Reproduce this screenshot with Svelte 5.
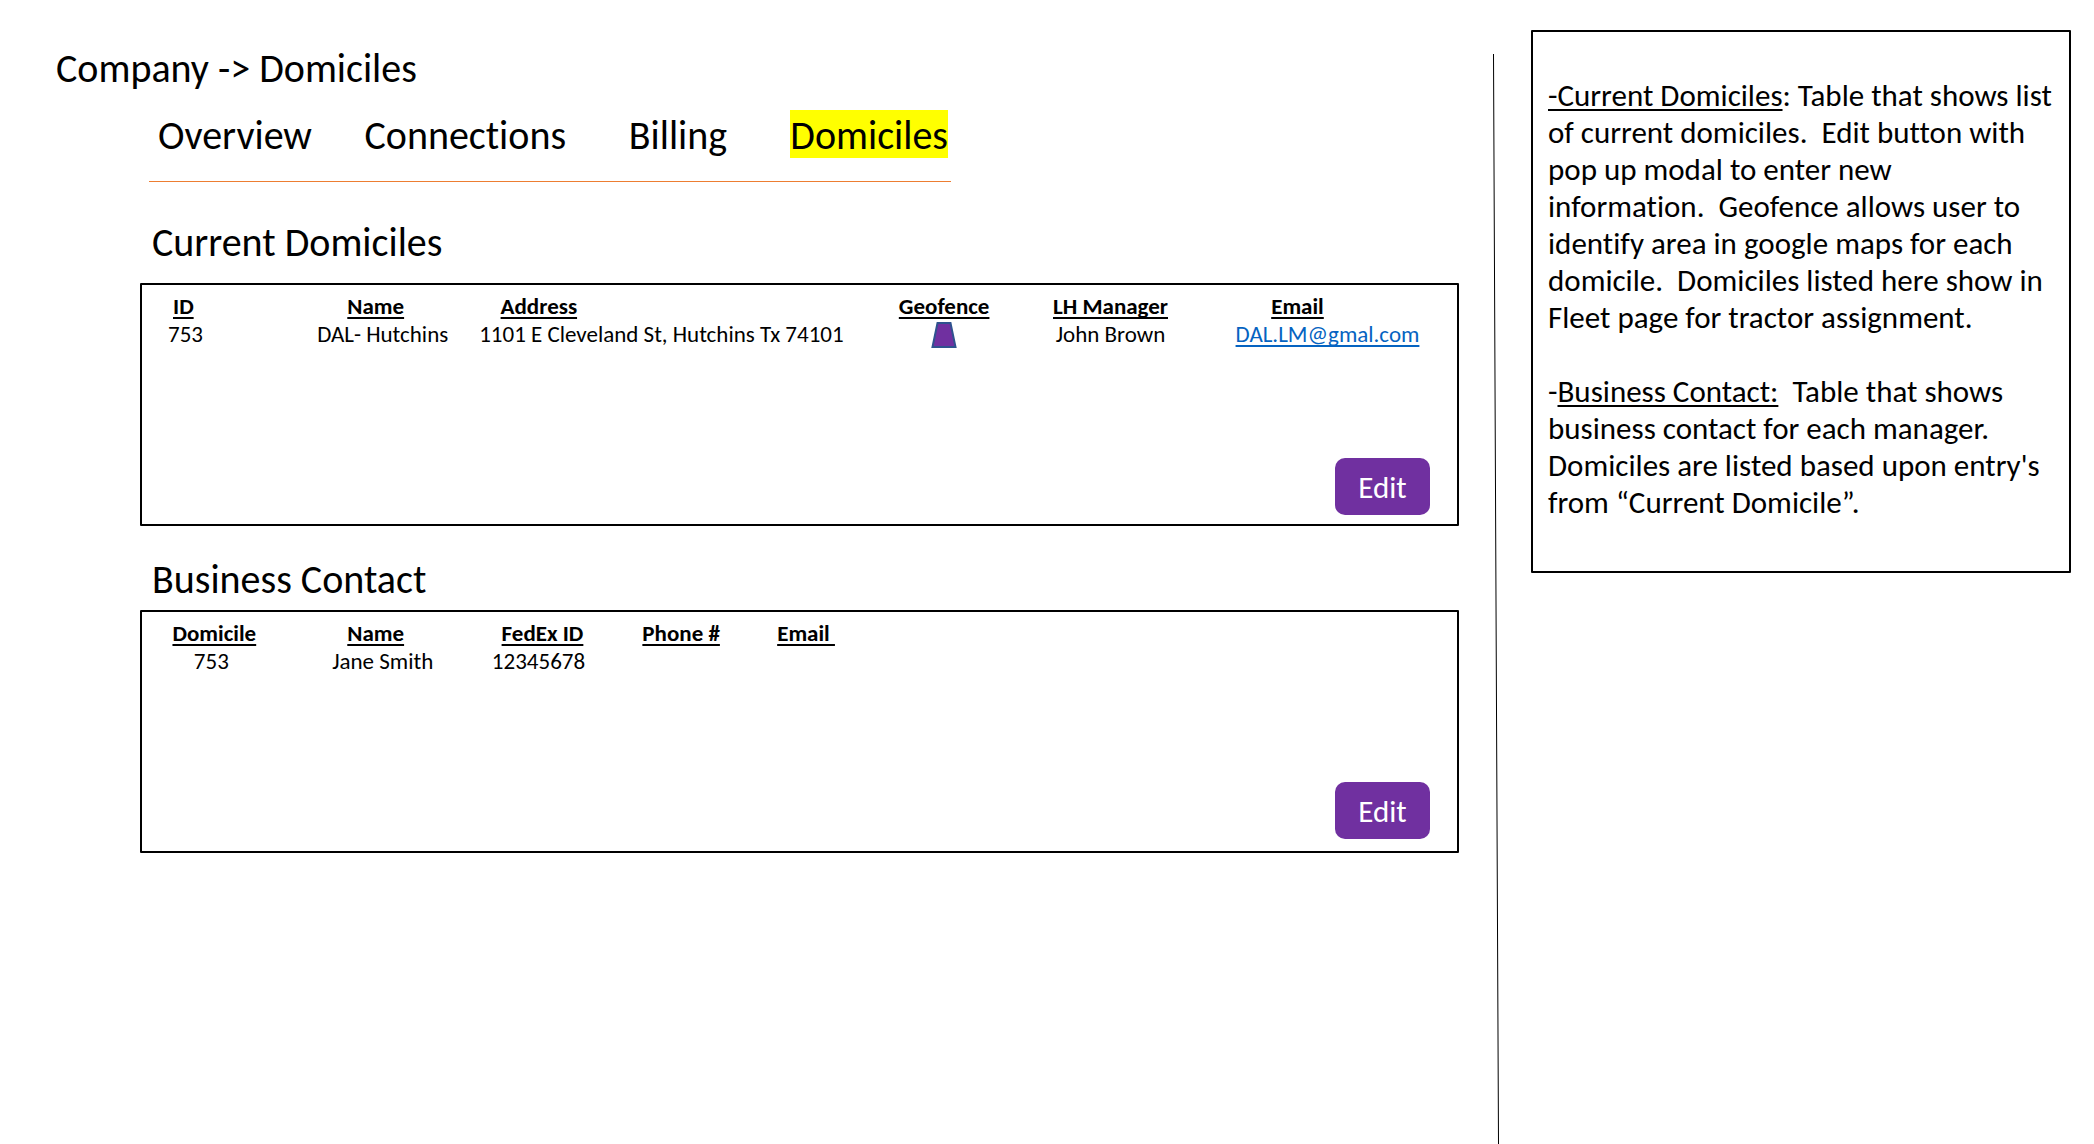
<script>
  const tabs = [
    { label: 'Overview', href: '#overview' },
    { label: 'Connections', href: '#connections' },
    { label: 'Billing', href: '#billing' },
    { label: 'Domiciles', href: '#domiciles', active: true }
  ];

  const domicileColumns = [
    { label: 'ID', width: 12, align: 'start' },
    { label: 'Name', width: 12, align: 'name' },
    { label: 'Address', width: 31, align: 'address' },
    { label: 'Geofence', width: 12 },
    { label: 'LH Manager', width: 13, align: 'manager' },
    { label: 'Email', width: 20, align: 'email' }
  ];

  const domiciles = [
    {
      id: '753',
      name: 'DAL- Hutchins',
      address: '1101 E Cleveland St, Hutchins Tx 74101',
      manager: 'John Brown',
      email: 'DAL.LM@gmal.com'
    }
  ];

  const contactColumns = [
    { label: 'Domicile', width: 11 },
    { label: 'Name', width: 14, align: 'name' },
    { label: 'FedEx ID', width: 10, align: 'fedex' },
    { label: 'Phone #', width: 12 },
    { label: 'Email\u00a0', width: 7 },
    { label: '', width: 46 }
  ];

  const contacts = [{ domicile: '753', name: 'Jane Smith', fedex: '12345678' }];
</script>

<div class="page">
  <main class="content">
    <h1>Company -&gt; Domiciles</h1>

    <nav class="tabs" aria-label="Company sections">
      {#each tabs as tab}
        <a href={tab.href} class:active={tab.active} aria-current={tab.active ? 'page' : undefined}>{tab.label}</a>
      {/each}
    </nav>

    <section>
      <h2>Current Domiciles</h2>
      <div class="panel">
        <table>
          <thead>
            <tr>
              {#each domicileColumns as column}
                <th scope="col" class={column.align} style:width="{column.width}%"><span>{column.label}</span></th>
              {/each}
            </tr>
          </thead>
          <tbody>
            {#each domiciles as row}
              <tr>
                <td class="start">{row.id}</td>
                <td class="name">{row.name}</td>
                <td>{row.address}</td>
                <td>
                  <svg class="fence" viewBox="0 0 26 26" role="img" aria-label="Geofence area">
                    <path d="M6.5 1H19.5L24.5 25H1.5Z" />
                  </svg>
                </td>
                <td class="manager">{row.manager}</td>
                <td class="email"><a href="mailto:{row.email}">{row.email}</a></td>
              </tr>
            {/each}
          </tbody>
        </table>
        <button type="button">Edit</button>
      </div>
    </section>

    <section>
      <h2>Business Contact</h2>
      <div class="panel">
        <table>
          <thead>
            <tr>
              {#each contactColumns as column}
                <th scope="col" class={column.align} style:width="{column.width}%"><span>{column.label}</span></th>
              {/each}
            </tr>
          </thead>
          <tbody>
            {#each contacts as row}
              <tr>
                <td class="domicile">{row.domicile}</td>
                <td class="name">{row.name}</td>
                <td class="fedex">{row.fedex}</td>
                <td></td>
                <td></td>
                <td></td>
              </tr>
            {/each}
          </tbody>
        </table>
        <button type="button">Edit</button>
      </div>
    </section>
  </main>

  <svg class="divider" viewBox="0 0 6 1090" preserveAspectRatio="none" aria-hidden="true">
    <line x1="0.5" y1="0" x2="5.5" y2="1090" />
  </svg>

  <aside class="notes">
    <p><u>-Current Domiciles</u>: Table that shows list of current domiciles.&nbsp; Edit button with pop up modal to enter new information.&nbsp; Geofence allows user to identify area in google maps for each domicile.&nbsp; Domiciles listed here show in Fleet page for tractor assignment.</p>
    <p>-<u>Business Contact:</u>&nbsp; Table that shows business contact for each manager. Domiciles are listed based upon entry's from “Current Domicile”.</p>
  </aside>
</div>

<style>
  :global(body) {
    margin: 0;
    background: #fff;
  }

  .page {
    box-sizing: border-box;
    min-height: 100vh;
    display: flex;
    align-items: flex-start;
    padding: 30px 23px 0 0;
    font-family: Carlito, Lato, sans-serif;
    font-variant-ligatures: none;
    color: #000;
  }

  .content {
    flex: 1;
    min-width: 0;
    padding: 15px 0 0 140px;
  }

  h1,
  h2 {
    margin: 0;
    font-size: 40px;
    line-height: 48px;
    font-weight: 400;
  }

  h1 {
    margin-left: -84px;
  }

  .tabs {
    display: grid;
    grid-template-columns: 207fr 265fr 162fr auto;
    width: 802px;
    box-sizing: border-box;
    margin: 17px 0 0 9px;
    padding: 0 3px 23px 9px;
    border-bottom: 1px solid #ed7d31;
    font-size: 40px;
    line-height: 45px;
  }

  .tabs a {
    padding-top: 3px;
    color: inherit;
    text-decoration: none;
  }

  .tabs .active {
    background: #ff0;
  }

  section {
    margin-top: 37px;
  }

  section + section {
    margin-top: 30px;
  }

  h2 {
    padding: 0 0 16px 12px;
  }

  section + section h2 {
    padding-bottom: 6px;
  }

  .panel {
    box-sizing: border-box;
    min-height: 243px;
    display: flex;
    flex-direction: column;
    justify-content: space-between;
    padding: 7px 0 9px;
    border: 2px solid #000;
    border-radius: 1px;
  }

  section + section .panel {
    padding-bottom: 12px;
  }

  table {
    width: 100%;
    table-layout: fixed;
    border-collapse: collapse;
    font-size: 23px;
    line-height: 28px;
  }

  th,
  td {
    box-sizing: border-box;
    padding: 0;
    height: 28px;
    text-align: center;
    white-space: nowrap;
  }

  .start {
    padding-left: 26px;
    text-align: left;
  }

  th.start {
    padding-left: 31px;
  }

  td.name {
    padding-left: 8px;
  }

  th.name {
    padding-right: 6px;
  }

  th.address {
    padding-left: 43px;
    text-align: left;
  }

  .manager,
  td.email,
  td.fedex {
    padding-left: 4px;
  }

  th.fedex {
    padding-left: 12px;
  }

  td.domicile {
    padding-right: 6px;
  }

  th.email {
    padding-right: 56px;
  }

  th span,
  td a,
  u {
    text-decoration: underline;
    text-decoration-thickness: 2px;
    text-underline-offset: 3px;
    text-decoration-skip-ink: none;
  }

  td a {
    color: #0563c1;
  }

  .fence {
    display: block;
    width: 26px;
    height: 26px;
    margin: 2px auto 0;
    fill: #7030a0;
    stroke: #2f528f;
    stroke-width: 2;
  }

  button {
    align-self: flex-end;
    width: 95px;
    height: 57px;
    margin-right: 27px;
    padding: 0;
    border: 0;
    border-radius: 10px;
    background: #7030a0;
    color: #fff;
    font: inherit;
    font-size: 31px;
  }

  .divider {
    flex: none;
    width: 6px;
    height: calc(100vh - 54px);
    margin: 24px 32px 0 34px;
  }

  .divider line {
    stroke: #000;
    stroke-width: 1;
  }

  .notes {
    flex: none;
    box-sizing: border-box;
    width: 540px;
    padding: 45px 12px 50px 15px;
    border: 2px solid #000;
    border-radius: 1px;
    font-size: 31px;
    line-height: 37px;
  }

  .notes p {
    margin: 0;
  }

  .notes p + p {
    margin-top: 37px;
  }
</style>
